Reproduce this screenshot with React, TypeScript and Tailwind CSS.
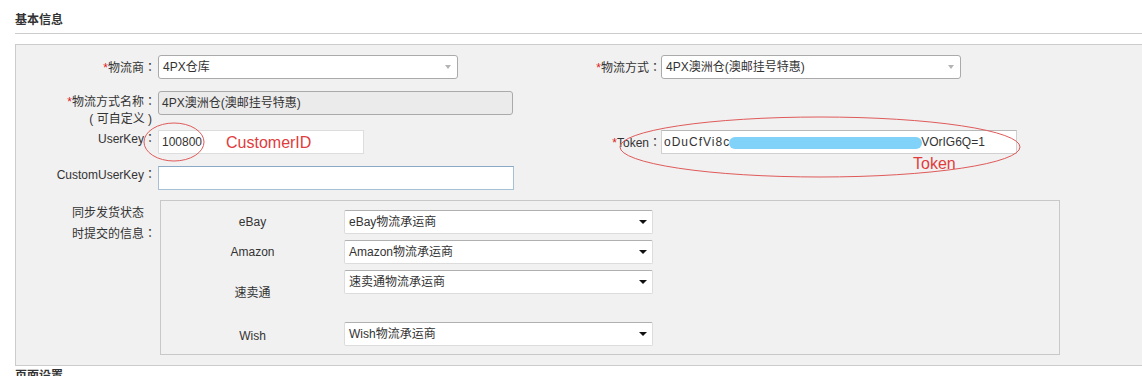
import React from "react";

const Req = () => <span className="text-[#e02020]">*</span>;
const Colon = () => (
  <span style={{ fontFamily: '"Noto Sans CJK TC", sans-serif' }}>：</span>
);

function TopSelect({ text, w }: { text: string; w: string }) {
  return (
    <div className={`${w} h-[24px] flex items-center justify-between border border-[#aaaaaa] rounded-[3px] bg-white pl-[4px] pr-[6px]`}>
      <span className="text-[#333]">{text}</span>
      <div className="w-0 h-0 border-x-[3px] border-x-transparent border-t-[4px] border-t-[#b4b4b4]" />
    </div>
  );
}

function SyncSelect({ text }: { text: string }) {
  return (
    <div className="w-[309px] h-[24px] flex items-center justify-between border border-[#dcdcdc] border-t-[#b0b0b0] rounded-[2px] bg-white pl-[4px] pr-[5px]">
      <span className="text-[#333]">{text}</span>
      <div className="w-0 h-0 border-x-[4px] border-x-transparent border-t-[4px] border-t-[#111]" />
    </div>
  );
}

function SyncRow({ label, text, h, labelPad }: { label: string; text: string; h: string; labelPad?: string }) {
  return (
    <div className={`flex ${h}`}>
      <div className={`w-[183px] flex items-center justify-center ${labelPad ?? ""}`}>{label}</div>
      <div className="self-start">
        <SyncSelect text={text} />
      </div>
    </div>
  );
}

export default function App() {
  return (
    <div
      className="relative w-[1142px] h-[376px] overflow-hidden bg-white text-[12px] text-[#333]"
      style={{ fontFamily: '"Liberation Sans", Arial, "Noto Sans CJK SC", sans-serif' }}
    >
      <div className="pl-[15px]">
        <div className="h-[33px] pt-[14px] leading-[12px] font-bold text-[#333]">基本信息</div>
        <div className="h-px bg-[#cccccc]" />
        <div className="mt-[10px] h-[322px] border border-r-0 border-[#cccccc] bg-[#f1f1f1]">
          {/* Row 1 */}
          <div className="flex items-center h-[24px] mt-[10px]">
            <div className="w-[545px] flex items-center">
              <div className="w-[140px] text-right"><Req />物流商<Colon /></div>
              <div className="ml-[2px]"><TopSelect text="4PX仓库" w="w-[300px]" /></div>
            </div>
            <div className="flex items-center">
              <div className="w-[100px] text-right"><Req />物流方式<Colon /></div>
              <TopSelect text="4PX澳洲仓(澳邮挂号特惠)" w="w-[300px]" />
            </div>
          </div>
          {/* Row 2 */}
          <div className="flex items-start h-[24px] mt-[12px]">
            <div className="w-[140px] text-right leading-[17px] pt-[1px]">
              <div><Req />物流方式名称<Colon /></div>
              <div className="pr-[4px]">( 可自定义 )</div>
            </div>
            <div className="ml-[2px] w-[355px] h-[24px] flex items-center border border-[#aaaaaa] rounded-[3px] bg-[#ebebeb] pl-[3px]">
              4PX澳洲仓(澳邮挂号特惠)
            </div>
          </div>
          {/* Row 3 */}
          <div className="flex items-center h-[24px] mt-[15px]">
            <div className="w-[545px] flex items-start h-[24px]">
              <div className="w-[140px] text-right leading-[16px]">UserKey<Colon /></div>
              <div className="ml-[2px] w-[206px] h-[24px] flex items-center border border-[#dddddd] bg-white pl-[3px]">100800</div>
            </div>
            <div className="flex items-center">
              <div className="w-[100px] text-right"><Req />Token<Colon /></div>
              <div className="w-[356px] h-[24px] flex items-center border border-[#d0d0d0] border-t-[#b8b8b8] bg-white pl-[2px]">
                <span className="tracking-[1px]">oDuCfVi8c</span>
                <span className="ml-[191px]">VOrIG6Q=1</span>
              </div>
            </div>
          </div>
          {/* Row 4 */}
          <div className="flex items-start h-[24px] mt-[12px]">
            <div className="w-[140px] text-right leading-[16px]">CustomUserKey<Colon /></div>
            <div className="ml-[2px] w-[356px] h-[24px] border border-[#a6c0d6] border-t-[#8aa9c4] bg-white" />
          </div>
          {/* Sync row */}
          <div className="flex items-start mt-[10px]">
            <div className="w-[140px] text-right pt-[3px]">
              <div className="inline-block text-left leading-[20px]">
                同步发货状态<br />时提交的信息<Colon />
              </div>
            </div>
            <div className="ml-[4px] w-[900px] h-[155px] border border-[#c8c8c8] pt-[9px] flex flex-col gap-[6px]">
              <SyncRow label="eBay" text="eBay物流承运商" h="h-[24px]" />
              <SyncRow label="Amazon" text="Amazon物流承运商" h="h-[24px]" />
              <SyncRow label="速卖通" text="速卖通物流承运商" h="h-[46px]" />
              <SyncRow label="Wish" text="Wish物流承运商" h="h-[24px]" labelPad="pt-[3px]" />
            </div>
          </div>
        </div>
        <div className="pt-[4px] leading-[12px] font-bold">页面设置</div>
      </div>

      {/* Annotations overlay */}
      <div className="absolute left-[729px] top-[137px] w-[193px] h-[12px] rounded-full bg-[#80d2f8]" />
      <svg className="absolute left-0 top-0 pointer-events-none" width="1142" height="376">
        <ellipse cx="174" cy="142" rx="30" ry="19" fill="none" stroke="#e05a5a" strokeWidth="1" />
        <ellipse cx="820" cy="147" rx="200" ry="30" fill="none" stroke="#e05a5a" strokeWidth="1" />
      </svg>
      <div className="absolute left-[226px] top-[135px] text-[16px] leading-[16px] text-[#e03c3c]">CustomerID</div>
      <div className="absolute left-[913px] top-[156px] text-[16px] leading-[16px] text-[#e03c3c]">Token</div>
    </div>
  );
}
